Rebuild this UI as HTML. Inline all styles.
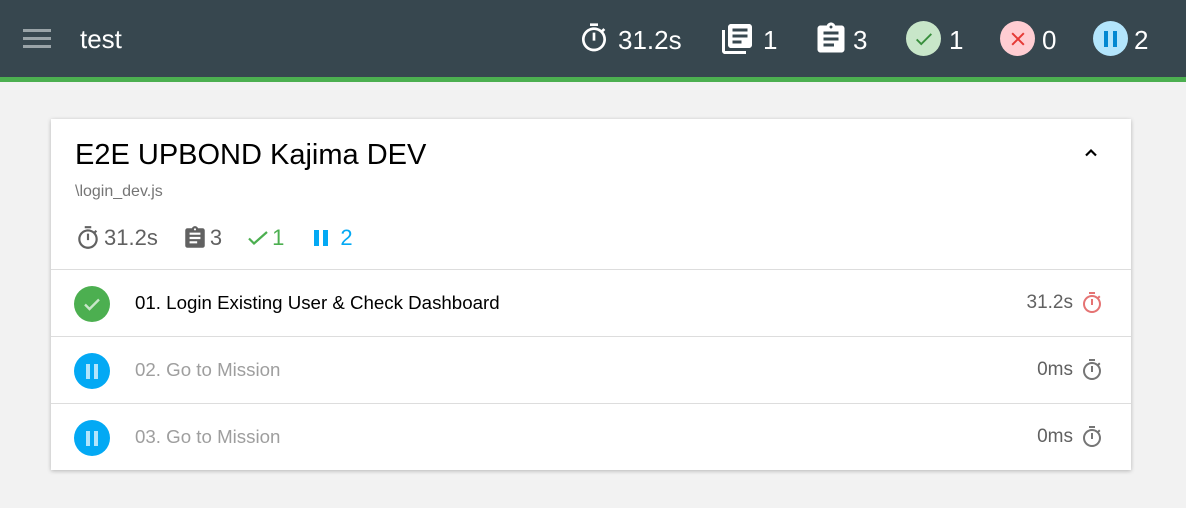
<!DOCTYPE html>
<html><head><style>
body{margin:0;width:1186px;height:508px;background:#f2f2f2;font-family:"Liberation Sans",Roboto,sans-serif;overflow:hidden;position:relative}
.hdr{position:absolute;left:0;top:0;width:1186px;height:77px;background:#37474f;border-bottom:5px solid #4caf50;color:#fff}
.a{position:absolute;display:flex;align-items:center}
.hdr .t{font-size:26px;line-height:1}
svg{display:block}
.card{position:absolute;left:51px;top:119px;width:1080px;height:351px;background:#fff;box-shadow:0 1px 4px rgba(0,0,0,.25)}
.row{position:absolute;left:0;width:1080px;height:67px;border-top:1px solid #ddd}
.circ{position:absolute;left:23px;top:16px;width:36px;height:36px;border-radius:50%;display:flex;align-items:center;justify-content:center}
.rt{position:absolute;left:84px;top:22px;font-size:18.7px}
.dur{position:absolute;right:58px;top:22px;font-size:19px;color:#616161}
.ti{position:absolute;right:27px;top:21px}
</style></head><body>
<div class="hdr">
<div class="a" style="left:23px;top:29px;flex-direction:column;gap:5px"><div style="width:28px;height:3px;background:#9aa4a8"></div><div style="width:28px;height:3px;background:#9aa4a8"></div><div style="width:28px;height:3px;background:#9aa4a8"></div></div>
<div class="a t" style="left:80px;top:26px">test</div>
<div class="a" style="left:578px;top:22px"><svg width="32" height="32" viewBox="0 0 24 24" fill="#fff"><path d="M15 1H9v2h6V1zm-4 13h2V8h-2v6zm8.03-6.61l1.42-1.42c-.43-.51-.9-.99-1.41-1.41l-1.42 1.42C16.07 4.74 14.12 4 12 4c-4.97 0-9 4.03-9 9s4.02 9 9 9 9-4.03 9-9c0-2.12-.74-4.07-1.97-5.61zM12 20c-3.870 0-7-3.13-7-7s3.13-7 7-7 7 3.13 7 7-3.13 7-7 7z"/></svg></div>
<div class="a t" style="left:618px;top:27px">31.2s</div>
<div class="a" style="left:719px;top:21px"><svg width="36" height="36" viewBox="0 0 24 24" fill="#fff"><path d="M4 6H2v14c0 1.1.9 2 2 2h14v-2H4V6zm16-4H8c-1.1 0-2 .9-2 2v12c0 1.1.9 2 2 2h12c1.1 0 2-.9 2-2V4c0-1.1-.9-2-2-2zm-1 9H9V9h10v2zm-4 4H9v-2h6v2zm4-8H9V5h10v2z"/></svg></div>
<div class="a t" style="left:763px;top:27px">1</div>
<div class="a" style="left:813px;top:21px"><svg width="36" height="36" viewBox="0 0 24 24" fill="#fff"><path d="M19 3h-4.18C14.4 1.84 13.3 1 12 1c-1.3 0-2.4.84-2.82 2H5c-1.1 0-2 .9-2 2v14c0 1.1.9 2 2 2h14c1.1 0 2-.9 2-2V5c0-1.1-.9-2-2-2zm-7 0c.55 0 1 .45 1 1s-.45 1-1 1-1-.45-1-1 .45-1 1-1zm2 14H7v-2h7v2zm3-4H7v-2h10v2zm0-4H7V7h10v2z"/></svg></div>
<div class="a t" style="left:853px;top:27px">3</div>
<div class="a" style="left:906px;top:21px;width:35px;height:35px;border-radius:50%;background:#c8e6c9;justify-content:center"><svg width="22" height="22" viewBox="0 0 24 24"><path d="M4 12.5l5 5L20 6.5" stroke="#388e3c" stroke-width="2" fill="none"/></svg></div>
<div class="a t" style="left:949px;top:27px">1</div>
<div class="a" style="left:1000px;top:21px;width:35px;height:35px;border-radius:50%;background:#ffcdd2;justify-content:center"><svg width="20" height="20" viewBox="0 0 24 24"><path d="M5 5L19 19M19 5L5 19" stroke="#e53935" stroke-width="2.4"/></svg></div>
<div class="a t" style="left:1042px;top:27px">0</div>
<div class="a" style="left:1093px;top:21px;width:35px;height:35px;border-radius:50%;background:#b3e5fc;justify-content:center;gap:5px"><div style="width:4px;height:16px;background:#0288d1"></div><div style="width:4px;height:16px;background:#0288d1"></div></div>
<div class="a t" style="left:1134px;top:27px">2</div>
</div>
<div class="card">
<div style="position:absolute;left:24px;top:20px;font-size:29px;color:#000">E2E UPBOND Kajima DEV</div>
<svg style="position:absolute;right:30px;top:24px" width="20" height="20" viewBox="0 0 24 24"><path d="M6 15l6-6 6 6" stroke="#000" stroke-width="2.6" fill="none"/></svg>
<div style="position:absolute;left:24px;top:64px;font-size:16px;color:#757575">\login_dev.js</div>
<div style="position:absolute;left:24px;top:106px;display:flex;align-items:center;font-size:22px;color:#616161">
<svg width="26" height="26" viewBox="0 0 24 24" fill="#616161"><path d="M15 1H9v2h6V1zm-4 13h2V8h-2v6zm8.03-6.61l1.42-1.42c-.43-.51-.9-.99-1.41-1.41l-1.42 1.42C16.07 4.74 14.12 4 12 4c-4.97 0-9 4.03-9 9s4.02 9 9 9 9-4.03 9-9c0-2.12-.74-4.07-1.97-5.61zM12 20c-3.87 0-7-3.13-7-7s3.13-7 7-7 7 3.13 7 7-3.13 7-7 7z"/></svg><span style="margin-left:3px">31.2s</span>
<svg style="margin-left:24px" width="26" height="26" viewBox="0 0 24 24" fill="#616161"><path d="M19 3h-4.18C14.4 1.84 13.3 1 12 1c-1.3 0-2.4.84-2.82 2H5c-1.1 0-2 .9-2 2v14c0 1.1.9 2 2 2h14c1.1 0 2-.9 2-2V5c0-1.1-.9-2-2-2zm-7 0c.55 0 1 .45 1 1s-.45 1-1 1-1-.45-1-1 .45-1 1-1zm2 14H7v-2h7v2zm3-4H7v-2h10v2zm0-4H7V7h10v2z"/></svg><span style="margin-left:2px">3</span>
<svg style="margin-left:24px" width="24" height="24" viewBox="0 0 24 24"><path d="M3 12.5l5 5L21 6" stroke="#4caf50" stroke-width="2.2" fill="none"/></svg><span style="margin-left:2px;color:#4caf50">1</span>
<div style="margin-left:30px;display:flex;gap:4px"><div style="width:5px;height:16px;background:#03a9f4"></div><div style="width:5px;height:16px;background:#03a9f4"></div></div><span style="margin-left:12px;color:#03a9f4">2</span>
</div>
<div class="row" style="top:150px">
<div class="circ" style="background:#4caf50"><svg width="24" height="24" viewBox="0 0 24 24"><path d="M5 12.5l4.5 4.5L19 7.5" stroke="#c8e6c9" stroke-width="2.4" fill="none"/></svg></div>
<div class="rt" style="color:#000">01. Login Existing User &amp; Check Dashboard</div>
<div class="dur">31.2s</div>
<svg class="ti" width="24" height="24" viewBox="0 0 24 24" fill="#e57373"><path d="M15 1H9v2h6V1zm-4 13h2V8h-2v6zm8.03-6.61l1.42-1.42c-.43-.51-.9-.99-1.41-1.41l-1.42 1.42C16.07 4.74 14.12 4 12 4c-4.97 0-9 4.03-9 9s4.02 9 9 9 9-4.03 9-9c0-2.12-.74-4.07-1.97-5.61zM12 20c-3.87 0-7-3.13-7-7s3.13-7 7-7 7 3.13 7 7-3.13 7-7 7z"/></svg>
</div>
<div class="row" style="top:217px">
<div class="circ" style="background:#03a9f4;gap:4px"><div style="width:4px;height:15px;background:#b3e5fc"></div><div style="width:4px;height:15px;background:#b3e5fc"></div></div>
<div class="rt" style="color:#9e9e9e">02. Go to Mission</div>
<div class="dur">0ms</div>
<svg class="ti" width="24" height="24" viewBox="0 0 24 24" fill="#757575"><path d="M15 1H9v2h6V1zm-4 13h2V8h-2v6zm8.03-6.61l1.42-1.42c-.43-.51-.9-.99-1.41-1.41l-1.42 1.42C16.07 4.74 14.12 4 12 4c-4.97 0-9 4.03-9 9s4.02 9 9 9 9-4.03 9-9c0-2.12-.74-4.07-1.97-5.61zM12 20c-3.87 0-7-3.13-7-7s3.13-7 7-7 7 3.13 7 7-3.13 7-7 7z"/></svg>
</div>
<div class="row" style="top:284px">
<div class="circ" style="background:#03a9f4;gap:4px"><div style="width:4px;height:15px;background:#b3e5fc"></div><div style="width:4px;height:15px;background:#b3e5fc"></div></div>
<div class="rt" style="color:#9e9e9e">03. Go to Mission</div>
<div class="dur">0ms</div>
<svg class="ti" width="24" height="24" viewBox="0 0 24 24" fill="#757575"><path d="M15 1H9v2h6V1zm-4 13h2V8h-2v6zm8.03-6.61l1.42-1.42c-.43-.51-.9-.99-1.41-1.41l-1.42 1.42C16.07 4.74 14.12 4 12 4c-4.97 0-9 4.03-9 9s4.02 9 9 9 9-4.03 9-9c0-2.12-.74-4.07-1.97-5.61zM12 20c-3.87 0-7-3.13-7-7s3.13-7 7-7 7 3.13 7 7-3.13 7-7 7z"/></svg>
</div>
</div>
</body></html>
